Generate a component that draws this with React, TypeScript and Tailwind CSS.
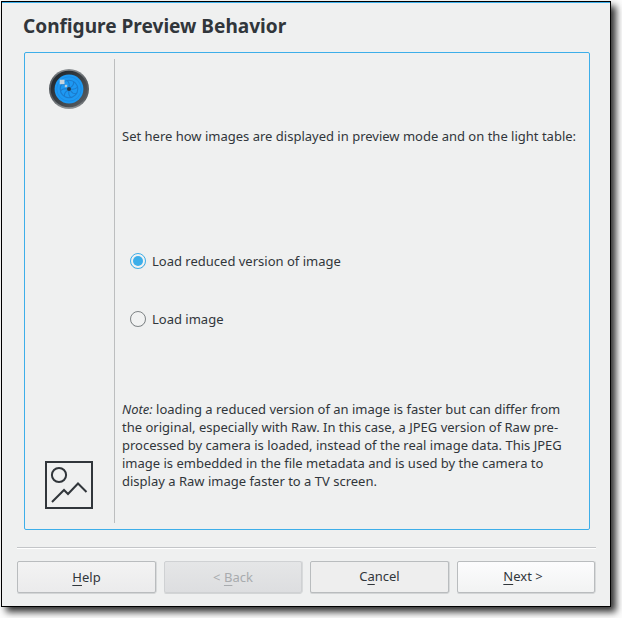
import React, { useState } from 'react';

function LensIcon() {
  return (
    <svg width="40" height="40" viewBox="0 0 40 40" className="block">
      <defs>
        <linearGradient id="rim" x1="0" y1="0" x2="0" y2="1">
          <stop offset="0" stopColor="#8a8e91" />
          <stop offset="0.3" stopColor="#555a5f" />
          <stop offset="0.75" stopColor="#5a5f63" />
          <stop offset="1" stopColor="#94989b" />
        </linearGradient>
        <linearGradient id="barrel" x1="0" y1="0" x2="1" y2="1">
          <stop offset="0.2" stopColor="#262d33" />
          <stop offset="1" stopColor="#5d6165" />
        </linearGradient>
      </defs>
      <circle cx="20" cy="20" r="20" fill="url(#rim)" />
      <circle cx="20" cy="20" r="18.3" fill="url(#barrel)" />
      <circle cx="20" cy="20" r="14.4" fill="#1d99f3" />
      <circle cx="20" cy="20" r="12.2" fill="none" stroke="#1c8ce4" strokeWidth="1" />
      <g fill="none" stroke="#1c7ccd" strokeWidth="1.1">
        <circle cx="20" cy="20" r="8.8" />
        {[0, 45, 90, 135, 180, 225, 270, 315].map((angle) => (
          <path key={angle} d="M20 18Q21 14 18 11.4" transform={`rotate(${angle} 20 20)`} />
        ))}
      </g>
      <circle cx="20" cy="20" r="2" fill="#26394a" />
      <rect x="10.7" y="10.7" width="4.8" height="4.5" fill="#c6d4df" />
      <rect x="15.8" y="15.8" width="2.4" height="2.4" fill="#b3cde0" />
    </svg>
  );
}

function PictureIcon() {
  return (
    <svg width="48" height="48" viewBox="0 0 48 48" fill="none" stroke="#31363b" strokeWidth="2" className="block">
      <rect x="1" y="1" width="46" height="46" />
      <circle cx="14" cy="14" r="7.1" />
      <path d="M7 41L19 29L23 33L33 22.5L41.5 31" />
    </svg>
  );
}

function Option({ label, checked, onSelect }: { label: string; checked: boolean; onSelect: () => void }) {
  return (
    <button role="radio" aria-checked={checked} onClick={onSelect} className="flex h-[18px] items-center gap-[6px] text-left">
      <svg width="16" height="16" viewBox="0 0 16 16" fill="none">
        <circle cx="8" cy="8.6" r="7.5" stroke="#d5d7d8" />
        <circle cx="8" cy="8" r="7.5" fill="#f1f2f2" stroke={checked ? '#3daee9' : '#7f8486'} />
        {checked && <circle cx="8" cy="8" r="5" fill="#3daee9" />}
      </svg>
      {label}
    </button>
  );
}

const buttonBase = 'flex h-[32px] items-center justify-center rounded-[2px] border border-[#b9bcbe] shadow-[0_1px_0_#d3d5d6,1px_0_0_#d8dadb]';

function Key({ children }: { children: string }) {
  return <span className="underline decoration-1 underline-offset-[3px]">{children}</span>;
}

export default function App() {
  const [reduced, setReduced] = useState(true);
  return (
    <div className="h-[618px] w-[622px] overflow-hidden bg-[#fdfdfd] p-px font-['Noto_Sans',sans-serif] text-[13px] leading-[18px] text-[#31363b]">
      <main className="flex h-[606px] w-[610px] flex-col border border-black bg-[#eff0f0] shadow-[5px_5px_7px_0px_rgba(0,0,0,0.8)]">
        <div className="h-px shrink-0 bg-[#3daee9]" />
        <h1 className="ml-[21px] mt-[9px] h-[28px] text-[19.07px] font-bold leading-[28px]">Configure Preview Behavior</h1>

        <section className="ml-[22px] mt-[12px] flex h-[478px] w-[566px] shrink-0 rounded-[2px] border border-[#3daee9] py-[6px]">
          <aside className="flex w-[90px] flex-col justify-between border-r border-[#bcbebf] pb-[14px] pl-[20px] pt-[10px]">
            <div className="pl-[4px]"><LensIcon /></div>
            <PictureIcon />
          </aside>
          <div className="flex flex-1 flex-col pl-[7px] pt-[68px]">
            <p className="whitespace-nowrap">Set here how images are displayed in preview mode and on the light table:</p>
            <div role="radiogroup" className="mt-[107px] flex flex-col gap-[40px] pl-[8px]">
              <Option label="Load reduced version of image" checked={reduced} onSelect={() => setReduced(true)} />
              <Option label="Load image" checked={!reduced} onSelect={() => setReduced(false)} />
            </div>
            <p className="mt-[72px] whitespace-nowrap">
              <em>Note:</em> loading a reduced version of an image is faster but can differ from<br />
              the original, especially with Raw. In this case, a JPEG version of Raw pre-<br />
              processed by camera is loaded, instead of the real image data. This JPEG<br />
              image is embedded in the file metadata and is used by the camera to<br />
              display a Raw image faster to a TV screen.
            </p>
          </div>
        </section>

        <div className="ml-[15px] mt-[17px] h-[2px] w-[579px] shrink-0 border-b border-white bg-[#c3c5c8]" />
        <footer className="ml-[15px] mt-[12px] flex gap-[8px]">
          <button className={`${buttonBase} w-[139px] bg-linear-to-b from-[#f3f3f3] to-[#ebebec]`}>
            <span><Key>H</Key>elp</span>
          </button>
          <button disabled className={`${buttonBase} w-[138px] border-[#cfd1d3] bg-linear-to-b from-[#e5e6e7] to-[#dddee0] text-[#a8abae]`}>
            <span>&lt; <Key>B</Key>ack</span>
          </button>
          <button className={`${buttonBase} w-[139px] bg-[#eeeeee] pb-[2px]`}>
            <span>C<Key>a</Key>ncel</span>
          </button>
          <button className={`${buttonBase} w-[138px] bg-linear-to-b from-[#fcfcfd] to-[#f2f3f3] pb-[2px] pr-[6px]`}>
            <span><Key>N</Key>ext &gt;</span>
          </button>
        </footer>
      </main>
    </div>
  );
}
